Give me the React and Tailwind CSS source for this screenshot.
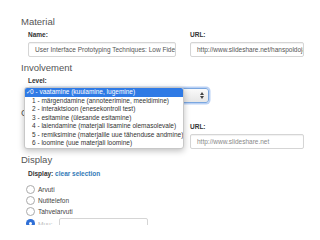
import React from 'react';

const levels = [
  '0 - vaatamine (kuulamine, lugemine)',
  '1 - märgendamine (annoteerimine, meeldimine)',
  '2 - interaktsioon (enesekontroll test)',
  '3 - esitamine (ülesande esitamine)',
  '4 - laiendamine (materjali lisamine olemasolevale)',
  '5 - remiksimine (materjalile uue tähenduse andmine)',
  '6 - loomine (uue materjali loomine)',
];

function Heading({ children }) {
  return <h3 className="text-[9.5px] leading-[12px] text-[#555]">{children}</h3>;
}

function Label({ children }) {
  return <label className="block text-[6.5px] leading-[8px] font-bold text-[#333]">{children}</label>;
}

function Field({ children, muted }) {
  return (
    <div
      className={`h-[15px] border border-[#d5d5d5] rounded-[2px] px-[6px] flex items-center overflow-hidden whitespace-nowrap text-[6.5px] shadow-[inset_0_1px_1px_rgba(0,0,0,0.06)] ${
        muted ? 'text-[#888]' : 'text-[#555]'
      }`}
    >
      {children}
    </div>
  );
}

function Radio({ label }) {
  return (
    <div className="flex items-center h-[11px] gap-[3px]">
      <span className="w-[9px] h-[9px] rounded-full border border-[#aaa] bg-white" />
      <span className="text-[6.5px] text-[#444]">{label}</span>
    </div>
  );
}

export default function App() {
  return (
    <div className="relative w-[320px] h-[240px] overflow-hidden bg-white font-['Liberation_Sans',Arial,sans-serif]">
      <div className="h-[225px] overflow-hidden pl-[21px] pt-[16px]">
        <Heading>Material</Heading>
        <div className="flex gap-[14px] pl-[7px] mt-[2.5px]">
          <div className="w-[148px]">
            <Label>Name:</Label>
            <div className="mt-[3.5px]">
              <Field>User Interface Prototyping Techniques: Low Fidelity</Field>
            </div>
          </div>
          <div className="w-[114px]">
            <Label>URL:</Label>
            <div className="mt-[3.5px]">
              <Field>http://www.slideshare.net/hanspoldoja/user-interface</Field>
            </div>
          </div>
        </div>

        <div className="mt-[5px]">
          <Heading>Involvement</Heading>
        </div>
        <div className="pl-[7px] mt-[3px]">
          <Label>Level:</Label>
          <div className="mt-[3px] w-[181px] h-[15px] rounded-[3px] border border-[#7aa7e0] shadow-[0_0_0_1.5px_rgba(100,150,230,0.45)] bg-gradient-to-b from-[#fafafa] to-[#e6e6e6] flex items-center justify-end pr-[4px]">
            <span className="flex flex-col items-center leading-none text-[#444]">
              <svg width="4" height="3" viewBox="0 0 4 3"><path d="M0 3 L2 0 L4 3 Z" fill="#444" /></svg>
              <svg width="4" height="3" viewBox="0 0 4 3" className="mt-[1px]"><path d="M0 0 L2 3 L4 0 Z" fill="#444" /></svg>
            </span>
          </div>
        </div>

        <div className="mt-[4px]">
          <Heading>Context</Heading>
        </div>
        <div className="flex gap-[14px] pl-[7px] mt-[4px]">
          <div className="w-[148px]">
            <Label>Provider:</Label>
            <div className="mt-[3px]">
              <Field>SlideShare</Field>
            </div>
          </div>
          <div className="w-[114px]">
            <Label>URL:</Label>
            <div className="mt-[3px]">
              <Field muted>http://www.slideshare.net</Field>
            </div>
          </div>
        </div>

        <div className="mt-[5px]">
          <Heading>Display</Heading>
        </div>
        <div className="pl-[7px] mt-[4px]">
          <div className="text-[6.5px] leading-[8px] font-bold text-[#333]">
            Display: <span className="text-[#337ab7]">clear selection</span>
          </div>
          <div className="mt-[6px] ml-[-2px] flex flex-col">
            <Radio label="Arvuti" />
            <Radio label="Nutitelefon" />
            <Radio label="Tahvelarvuti" />
            <div className="flex items-start gap-[3px] mt-[1px]">
              <span className="mt-[1px] w-[9px] h-[9px] rounded-full bg-[#2f6fd6] flex items-center justify-center">
                <span className="w-[3px] h-[3px] rounded-full bg-white" />
              </span>
              <span className="text-[6.5px] text-[#bbb] mt-[2px]">Muu:</span>
              <div className="ml-[4px] w-[89px] h-[15px] border border-[#d5d5d5] rounded-[2px]" />
            </div>
          </div>
        </div>
      </div>

      <ul className="absolute left-[24px] top-[87px] w-[160px] bg-white border border-[#c8c8c8] rounded-[3px] shadow-[0_2px_6px_rgba(0,0,0,0.25)] overflow-hidden">
        {levels.map((l, i) => (
          <li
            key={i}
            className={`h-[8.5px] flex items-center whitespace-nowrap text-[6.5px] leading-none ${
              i === 0 ? 'bg-[#2f7ae5] text-white pl-[1px]' : 'text-[#333] pl-[7px]'
            }`}
          >
            {i === 0 && <span className="w-[4px] text-[6px]">✓</span>}
            {l}
          </li>
        ))}
      </ul>
    </div>
  );
}
